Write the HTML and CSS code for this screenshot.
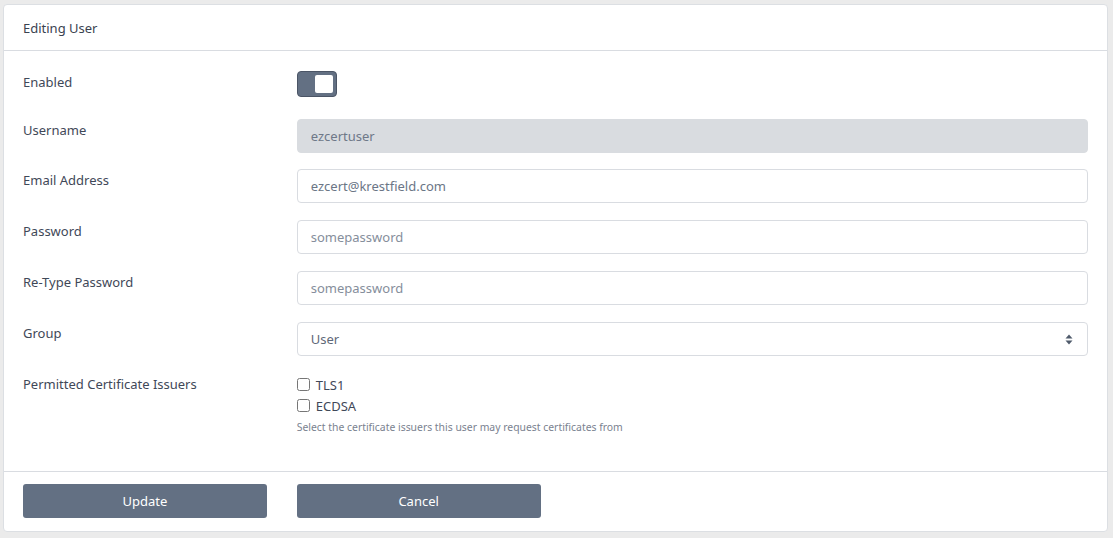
FILE: index.html
```html
<!DOCTYPE html>
<html lang="en">
<head>
<meta charset="utf-8">
<title>Editing User</title>
<link rel="stylesheet" href="styles.css">
</head>
<body>
<div class="card">
  <div class="card-header">Editing User</div>
  <div class="card-body">
    <div class="form-row toggle-row">
      <label class="col-label">Enabled</label>
      <div class="col-field">
        <span class="toggle"><span class="knob"></span></span>
      </div>
    </div>
    <div class="form-row tight">
      <label class="col-label">Username</label>
      <div class="col-field"><div class="input disabled">ezcertuser</div></div>
    </div>
    <div class="form-row">
      <label class="col-label">Email Address</label>
      <div class="col-field"><div class="input">ezcert@krestfield.com</div></div>
    </div>
    <div class="form-row">
      <label class="col-label">Password</label>
      <div class="col-field"><div class="input placeholder">somepassword</div></div>
    </div>
    <div class="form-row">
      <label class="col-label">Re-Type Password</label>
      <div class="col-field"><div class="input placeholder">somepassword</div></div>
    </div>
    <div class="form-row">
      <label class="col-label">Group</label>
      <div class="col-field">
        <div class="input select">
          <span>User</span>
          <svg class="caret" width="8" height="11" viewBox="0 0 8 11"><path d="M4 0.5L7.5 4.5H0.5Z M4 10.5L0.5 6.5H7.5Z" fill="#4f5a6b"/></svg>
        </div>
      </div>
    </div>
    <div class="form-row last">
      <label class="col-label">Permitted Certificate Issuers</label>
      <div class="col-field checks">
        <label class="check"><input type="checkbox"><span>TLS1</span></label>
        <label class="check"><input type="checkbox"><span>ECDSA</span></label>
        <div class="help">Select the certificate issuers this user may request certificates from</div>
      </div>
    </div>
  </div>
  <div class="card-footer">
    <div class="btn-col"><button class="btn">Update</button></div>
    <div class="btn-col"><button class="btn">Cancel</button></div>
  </div>
</div>
</body>
</html>
```

FILE: styles.css
```css
html, body {
  margin: 0;
  padding: 0;
  background: #ebebeb;
}
body {
  padding: 4px 5px 0 3px;
  font-family: "Noto Sans", "Open Sans", sans-serif;
  font-size: 13px;
  color: #3f4858;
}
.card {
  width: 1105px;
  box-sizing: border-box;
  background: #fff;
  border: 1px solid #dcdfe3;
  border-radius: 4px;
}
.card-header {
  padding: 13px 19px 11px;
  line-height: 21px;
  border-bottom: 1px solid #d9dce1;
  color: #3a4250;
}
.card-body {
  padding: 20px 19px 19px;
}
.form-row {
  display: flex;
  margin: 0 -15px 17px;
}
.form-row.tight {
  margin-bottom: 16px;
}
.col-label {
  flex: 0 0 25%;
  box-sizing: border-box;
  padding: 1px 15px 0;
  line-height: 20px;
  color: #3f4858;
}
.col-field {
  flex: 0 0 75%;
  box-sizing: border-box;
  padding: 0 15px;
}
.col-field.checks {
  padding-top: 1px;
}
.toggle-row {
  min-height: 31px;
}
.toggle {
  display: flex;
  justify-content: flex-end;
  align-items: center;
  box-sizing: border-box;
  width: 40px;
  height: 26px;
  padding: 0 3px;
  background: #637083;
  border: 1px solid #4b5566;
  border-radius: 4px;
}
.knob {
  width: 18px;
  height: 18px;
  background: #fff;
  border-radius: 2px;
}
.input {
  display: flex;
  align-items: center;
  box-sizing: border-box;
  height: 34px;
  padding: 0 13px;
  border: 1px solid #d9dce1;
  border-radius: 4px;
  color: #6b7686;
  background: #fff;
}
.input.disabled {
  background: #d9dce0;
  border-color: #d9dce0;
  color: #6e7888;
}
.input.placeholder {
  color: #858e9b;
}
.input.select {
  justify-content: space-between;
  padding-right: 14px;
  color: #5e6878;
}
.caret {
  display: block;
}
.check {
  display: flex;
  align-items: center;
  height: 21px;
  color: #3f4858;
}
.check input {
  width: 13px;
  height: 13px;
  margin: 0 6px 0 0;
}
.help {
  margin-top: 4px;
  font-size: 10.4px;
  line-height: 15px;
  color: #7a8290;
}
.card-footer {
  display: flex;
  padding: 12px 4px 13px;
  border-top: 1px solid #d9dce1;
}
.btn-col {
  flex: 0 0 273.75px;
  box-sizing: border-box;
  padding: 0 15px;
}
.btn {
  display: block;
  width: 100%;
  height: 34px;
  border: none;
  border-radius: 3px;
  background: #637083;
  color: #fff;
  font-family: "Noto Sans", "Open Sans", sans-serif;
  font-size: 13px;
}
```
